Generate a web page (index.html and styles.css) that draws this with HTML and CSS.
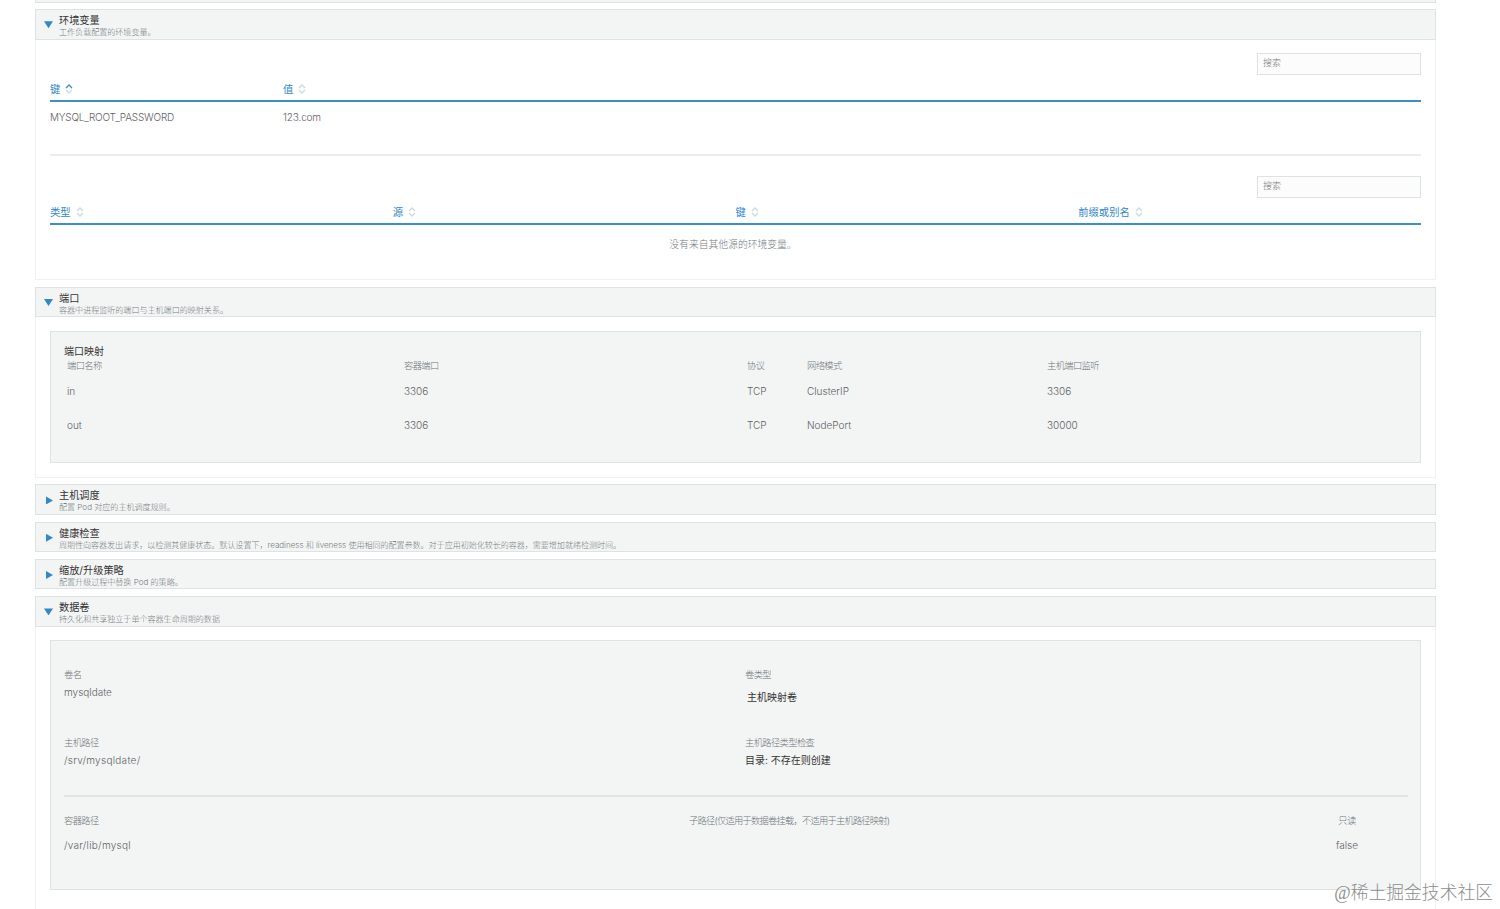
FILE: index.html
```html
<!DOCTYPE html>
<html lang="zh-CN">
<head>
    <meta charset="UTF-8">
    <meta name="viewport" content="width=device-width, initial-scale=1.0">
    <title>工作负载</title>
    <link rel="stylesheet" href="styles.css">
</head>
<body>
    <svg width="0" height="0" class="sprite">
        <symbol id="sort" viewBox="0 0 8 10">
            <path class="up" d="M1 4 L4 1 L7 4"/>
            <path class="down" d="M1 6 L4 9 L7 6"/>
        </symbol>
    </svg>
    <main class="container">
        <div class="prev"></div>

        <section class="accordion">
            <div class="header">
                <span class="arrow open"></span>
                <div>
                    <div class="title">环境变量</div>
                    <div class="detail">工作负载配置的环境变量。</div>
                </div>
            </div>
            <div class="content env">
                <input class="search" type="text" placeholder="搜索">
                <div class="thead cols-env">
                    <div>键<svg class="sort active"><use href="#sort"/></svg></div>
                    <div>值<svg class="sort"><use href="#sort"/></svg></div>
                </div>
                <div class="row cols-env">
                    <div class="env-key">MYSQL_ROOT_PASSWORD</div>
                    <div class="env-value">123.com</div>
                </div>
                <div class="divider"></div>
                <input class="search" type="text" placeholder="搜索">
                <div class="thead cols-source">
                    <div>类型<svg class="sort"><use href="#sort"/></svg></div>
                    <div>源<svg class="sort"><use href="#sort"/></svg></div>
                    <div>键<svg class="sort"><use href="#sort"/></svg></div>
                    <div>前缀或别名<svg class="sort"><use href="#sort"/></svg></div>
                </div>
                <div class="empty">没有来自其他源的环境变量。</div>
            </div>
        </section>

        <section class="accordion">
            <div class="header">
                <span class="arrow open"></span>
                <div>
                    <div class="title">端口</div>
                    <div class="detail">容器中进程监听的端口与主机端口的映射关系。</div>
                </div>
            </div>
            <div class="content ports">
                <div class="card">
                    <div class="card-title">端口映射</div>
                    <div class="cols-port labels">
                        <div>端口名称</div>
                        <div>容器端口</div>
                        <div>协议</div>
                        <div>网络模式</div>
                        <div>主机端口监听</div>
                    </div>
                    <div class="cols-port port">
                        <div>in</div>
                        <div>3306</div>
                        <div>TCP</div>
                        <div>ClusterIP</div>
                        <div>3306</div>
                    </div>
                    <div class="cols-port port">
                        <div>out</div>
                        <div>3306</div>
                        <div>TCP</div>
                        <div>NodePort</div>
                        <div>30000</div>
                    </div>
                </div>
            </div>
        </section>

        <section class="accordion">
            <div class="header">
                <span class="arrow"></span>
                <div>
                    <div class="title">主机调度</div>
                    <div class="detail">配置 Pod 对应的主机调度规则。</div>
                </div>
            </div>
        </section>

        <section class="accordion">
            <div class="header">
                <span class="arrow"></span>
                <div>
                    <div class="title">健康检查</div>
                    <div class="detail long">周期性向容器发出请求，以检测其健康状态。默认设置下，readiness 和 liveness 使用相同的配置参数。对于应用初始化较长的容器，需要增加就绪检测时间。</div>
                </div>
            </div>
        </section>

        <section class="accordion">
            <div class="header">
                <span class="arrow"></span>
                <div>
                    <div class="title">缩放/升级策略</div>
                    <div class="detail">配置升级过程中替换 Pod 的策略。</div>
                </div>
            </div>
        </section>

        <section class="accordion">
            <div class="header">
                <span class="arrow open"></span>
                <div>
                    <div class="title">数据卷</div>
                    <div class="detail">持久化和共享独立于单个容器生命周期的数据</div>
                </div>
            </div>
            <div class="content volumes">
                <div class="card">
                    <div class="cols-volume">
                        <div>
                            <div class="label">卷名</div>
                            <div class="value">mysqldate</div>
                        </div>
                        <div>
                            <div class="label">卷类型</div>
                            <div class="value dark volume-type">主机映射卷</div>
                        </div>
                        <div>
                            <div class="label">主机路径</div>
                            <div class="value path">/srv/mysqldate/</div>
                        </div>
                        <div>
                            <div class="label">主机路径类型检查</div>
                            <div class="value dark">目录: 不存在则创建</div>
                        </div>
                    </div>
                    <div class="cols-mount">
                        <div>
                            <div class="label">容器路径</div>
                            <div class="value path">/var/lib/mysql</div>
                        </div>
                        <div>
                            <div class="label subpath">子路径(仅适用于数据卷挂载，不适用于主机路径映射)</div>
                        </div>
                        <div class="readonly">
                            <div class="label">只读</div>
                            <div class="value">false</div>
                        </div>
                    </div>
                </div>
            </div>
        </section>
    </main>
    <div class="watermark"><span>@</span>稀土掘金技术社区</div>
</body>
</html>
```
FILE: styles.css
```css
* {
    box-sizing: border-box;
}
body {
    margin: 0;
    height: 909px;
    overflow: hidden;
    position: relative;
    background: #fff;
    color: #5f6064;
    font-family: Inter, "Noto Sans CJK SC", sans-serif;
    font-size: 10px;
    font-weight: 300;
}
.sprite {
    position: absolute;
}
.container {
    width: 1401px;
    margin-left: 35px;
}
.prev {
    height: 3px;
    margin-bottom: 6.3px;
    background: #f3f5f5;
    border: 1px solid #dde2e3;
    border-top: none;
}
.accordion {
    margin-bottom: 7px;
}
.header {
    display: flex;
    height: 30.3px;
    padding: 4px 0 0 8px;
    background: #f3f5f5;
    border: 1px solid #dde2e3;
}
.arrow {
    width: 7px;
    height: 8px;
    margin: 7px 6px 0 2px;
    background: #3388c8;
    clip-path: polygon(0 0, 100% 50%, 0 100%);
}
.arrow.open {
    width: 9px;
    height: 7px;
    margin: 7px 6px 0 0;
    clip-path: polygon(0 0, 100% 0, 50% 100%);
}
.title {
    line-height: 13px;
    font-size: 10.2px;
    font-weight: 400;
    color: #333;
}
.detail {
    line-height: 10px;
    font-size: 8.05px;
    color: #747c80;
    white-space: nowrap;
}
.detail.long {
    letter-spacing: -0.03px;
}
.content {
    padding: 0 14px;
    border: 1px solid #eef1f1;
    border-top: none;
}
.env {
    height: 240.4px;
    padding-top: 13.4px;
}
.ports {
    height: 160.9px;
    margin-bottom: -0.7px;
    padding-top: 13.7px;
}
.volumes {
    height: 300px;
    padding-top: 13.3px;
}
.search {
    display: block;
    width: 164px;
    height: 22px;
    margin-left: auto;
    padding: 0 5px 2px;
    background: #fcfcfc;
    border: 1px solid #dde2e3;
    border-radius: 0;
    font: inherit;
    font-size: 9px;
}
.search::placeholder {
    color: #777;
}
.thead {
    height: 27px;
    padding-top: 5px;
    line-height: 19px;
    border-bottom: 2px solid #3d8fc8;
    color: #3087c8;
    font-size: 10.3px;
    font-weight: 400;
}
.cols-env {
    display: grid;
    grid-template-columns: 233px 1fr;
}
.cols-source {
    display: grid;
    grid-template-columns: repeat(4, 1fr);
}
.sort {
    --up: #c6dce2;
    width: 8px;
    height: 10px;
    margin-left: 5px;
    vertical-align: -1.5px;
    fill: none;
    stroke: #c6dce2;
    stroke-width: 1.3;
}
.sort.active {
    --up: #3d8fc8;
}
.up {
    stroke: var(--up);
}
.row {
    height: 32px;
    line-height: 31px;
}
.env-key {
    letter-spacing: -0.18px;
}
.env-value {
    letter-spacing: -0.15px;
}
.divider {
    height: 2px;
    margin: 20px 0;
    background: #eceeee;
}
.empty {
    line-height: 39px;
    padding-right: 5px;
    text-align: center;
    color: #74797e;
    font-size: 9.8px;
}
.card {
    padding: 13px 12px 0 13px;
    background: #f3f5f5;
    border: 1px solid #dde2e3;
}
.ports .card {
    height: 132px;
}
.card-title {
    height: 14px;
    line-height: 13px;
    font-weight: 400;
    color: #333;
}
.cols-port {
    display: grid;
    grid-template-columns: 337px 343px 60px 240px 1fr;
    padding-left: 3px;
}
.labels,
.label {
    color: #6d757a;
    font-size: 9.3px;
    letter-spacing: -0.65px;
}
.labels {
    line-height: 14px;
    margin-bottom: 2px;
}
.port {
    height: 34px;
    line-height: 33px;
}
.volumes .card {
    height: 250px;
    padding-top: 26px;
}
.cols-volume {
    display: grid;
    grid-template-columns: 681px 1fr;
    grid-template-rows: 68px 60px;
}
.label {
    line-height: 16px;
}
.label.subpath {
    letter-spacing: -0.8px;
}
.value {
    line-height: 19px;
}
.value.path {
    letter-spacing: 0.28px;
}
.value.dark {
    color: #333;
    font-weight: 400;
}
.volume-type {
    padding: 5px 0 0 2px;
}
.cols-mount {
    display: grid;
    grid-template-columns: 625px 1fr 122px;
    padding-top: 16px;
    border-top: 2px solid #e0e3e3;
}
.cols-mount .value {
    margin-top: 7px;
}
.readonly {
    text-align: center;
}
.watermark {
    position: absolute;
    right: 7px;
    bottom: 4px;
    line-height: 24px;
    font-size: 17.8px;
    color: #8c8c8c;
    white-space: nowrap;
}
.watermark span {
    font-family: "Liberation Serif", serif;
}
```
